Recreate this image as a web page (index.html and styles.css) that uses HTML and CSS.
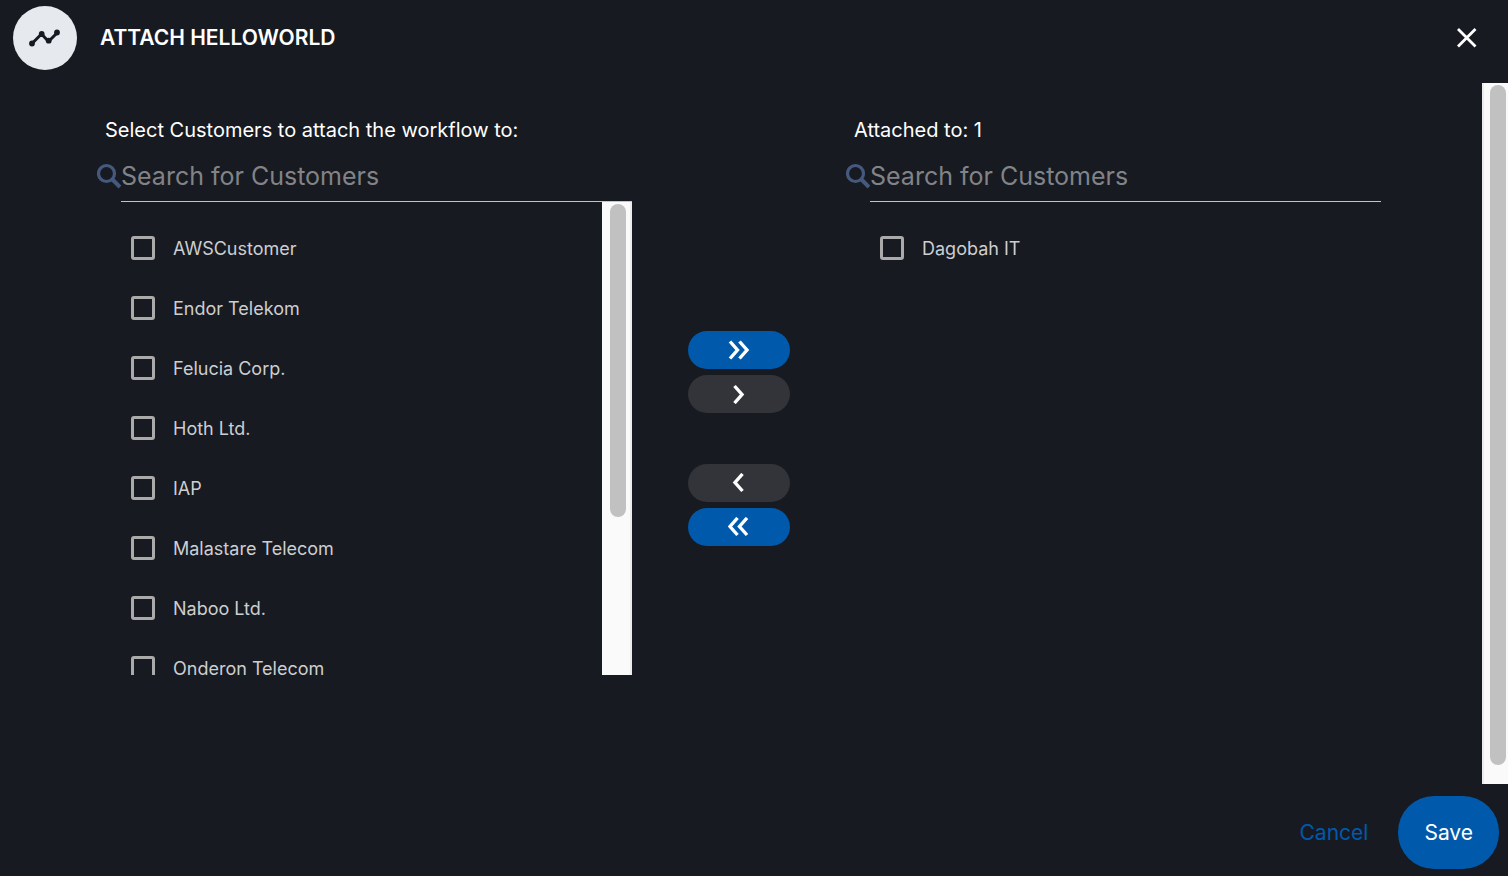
FILE: index.html
```html
<!DOCTYPE html>
<html lang="en">
<head>
<meta charset="utf-8">
<title>Attach HelloWorld</title>
<link rel="stylesheet" href="styles.css">
</head>
<body>
<div class="dialog">
  <header class="dialog-header">
    <span class="avatar">
      <svg width="32" height="32" viewBox="0 0 32 32" aria-hidden="true">
        <path d="M3 21.500 12.500 12l7 7.500 9-9" fill="none" stroke="#171a21" stroke-width="3" stroke-linejoin="round"/>
        <g fill="#171a21"><circle cx="3" cy="21.500" r="2.900"/><circle cx="12.700" cy="12" r="2.900"/><circle cx="19.700" cy="18.700" r="2.900"/><circle cx="28" cy="10.500" r="2.900"/></g>
      </svg>
    </span>
    <h1 class="title">ATTACH HELLOWORLD</h1>
    <button class="close" type="button" aria-label="Close">
      <svg width="20" height="20" viewBox="0 0 20 20" aria-hidden="true"><path d="M1 1l17.500 17.500M18.500 1L1 18.500" fill="none" stroke="#fff" stroke-width="2.800"/></svg>
    </button>
  </header>

  <main class="dialog-body">
    <div class="transfer">
      <section class="panel">
        <h2 class="panel-title">Select Customers to attach the workflow to:</h2>
        <div class="search">
          <svg class="search-icon" width="24" height="26" viewBox="0 0 24 26" aria-hidden="true"><circle cx="9.500" cy="10.500" r="8" fill="none" stroke="#45597f" stroke-width="3.200"/><path d="M15 16l8 8" stroke="#45597f" stroke-width="4"/></svg>
          <input class="search-input" type="text" placeholder="Search for Customers" aria-label="Search available customers">
        </div>
        <div class="list-frame">
          <ul class="list">
            <li><label class="row"><input class="check" type="checkbox">AWSCustomer</label></li>
            <li><label class="row"><input class="check" type="checkbox">Endor Telekom</label></li>
            <li><label class="row"><input class="check" type="checkbox">Felucia Corp.</label></li>
            <li><label class="row"><input class="check" type="checkbox">Hoth Ltd.</label></li>
            <li><label class="row"><input class="check" type="checkbox">IAP</label></li>
            <li><label class="row"><input class="check" type="checkbox">Malastare Telecom</label></li>
            <li><label class="row"><input class="check" type="checkbox">Naboo Ltd.</label></li>
            <li><label class="row"><input class="check" type="checkbox">Onderon Telecom</label></li>
          </ul>
          <div class="scrollbar scrollbar-list"><div class="thumb thumb-list"></div></div>
        </div>
      </section>

      <div class="moves">
        <div class="move-group">
          <button class="move move-all" type="button" aria-label="Attach all">
            <svg width="22" height="20" viewBox="0 0 22 20" aria-hidden="true"><path d="M2 1.500l7.500 8.500L2 18.500M11.500 1.500l7.500 8.500-7.500 8.500" fill="none" stroke="#fff" stroke-width="3.400"/></svg>
          </button>
          <button class="move" type="button" aria-label="Attach selected">
            <svg width="12" height="20" viewBox="0 0 12 20" aria-hidden="true"><path d="M1.500 2L9 10.500 1.500 19" fill="none" stroke="#fff" stroke-width="3.400"/></svg>
          </button>
        </div>
        <div class="move-group">
          <button class="move" type="button" aria-label="Detach selected">
            <svg width="14" height="20" viewBox="0 0 14 20" aria-hidden="true"><path d="M10.500 1L3 9.500l7.500 8.500" fill="none" stroke="#fff" stroke-width="3.400"/></svg>
          </button>
          <button class="move move-all" type="button" aria-label="Detach all">
            <svg width="22" height="20" viewBox="0 0 22 20" aria-hidden="true"><path d="M9.500 1L2 9.500 9.500 18M19 1l-7.500 8.500L19 18" fill="none" stroke="#fff" stroke-width="3.400"/></svg>
          </button>
        </div>
      </div>

      <section class="panel">
        <h2 class="panel-title">Attached to: 1</h2>
        <div class="search">
          <svg class="search-icon" width="24" height="26" viewBox="0 0 24 26" aria-hidden="true"><circle cx="9.500" cy="10.500" r="8" fill="none" stroke="#45597f" stroke-width="3.200"/><path d="M15 16l8 8" stroke="#45597f" stroke-width="4"/></svg>
          <input class="search-input" type="text" placeholder="Search for Customers" aria-label="Search attached customers">
        </div>
        <div class="list-frame">
          <ul class="list">
            <li><label class="row"><input class="check" type="checkbox">Dagobah IT</label></li>
          </ul>
        </div>
      </section>
    </div>
    <div class="scrollbar scrollbar-page"><div class="thumb thumb-page"></div></div>
  </main>

  <footer class="dialog-footer">
    <button class="cancel" type="button">Cancel</button>
    <button class="save" type="button">Save</button>
  </footer>
</div>
</body>
</html>
```
FILE: styles.css
```css
* { box-sizing: border-box; }

body {
  margin: 0;
  background: #171a21;
  color: #fff;
  font-family: Inter, Roboto, sans-serif;
}

button, input { font: inherit; }
button { border: 0; cursor: pointer; }

.dialog {
  display: flex;
  flex-direction: column;
  height: 100vh;
}

.dialog-header {
  display: flex;
  align-items: center;
  padding: 6px 31px 13px 13px;
}

.avatar {
  display: flex;
  align-items: center;
  justify-content: center;
  width: 64px;
  height: 64px;
  border-radius: 50%;
  background: #e6e9ee;
}

.title {
  margin: 0 auto 0 23px;
  font-size: 21px;
  line-height: 24px;
  font-weight: 600;
}

.close {
  display: flex;
  padding: 0;
  background: none;
}

.dialog-body {
  display: flex;
  flex: 1;
  min-height: 0;
}

.transfer {
  display: grid;
  grid-template-columns: 1fr 214px 1fr;
  grid-template-rows: minmax(0, 1fr);
  flex: 1;
  padding: 35px 101px 109px 97px;
}

.panel {
  display: flex;
  flex-direction: column;
  min-width: 0;
  min-height: 0;
}

.panel-title {
  margin: 0 0 8px;
  padding-left: 8px;
  font-size: 20px;
  line-height: 24px;
  font-weight: 400;
}

.search {
  display: flex;
  align-items: center;
}

.search-icon { flex: none; }

.search-input {
  flex: 1;
  min-width: 0;
  height: 52px;
  padding: 0;
  border: 0;
  border-bottom: 1px solid #c3c4c7;
  background: none;
  color: #fff;
  font-size: 25px;
}

.search-input::placeholder { color: #828387; opacity: 1; }

.list-frame {
  display: flex;
  flex: 1;
  min-height: 0;
}

.list {
  flex: 1;
  margin: 0;
  padding: 16px 0 0 34px;
  overflow: hidden;
  list-style: none;
}

.row {
  display: flex;
  align-items: center;
  gap: 18px;
  height: 60px;
  color: #cdced0;
  font-size: 18px;
}

.check {
  appearance: none;
  width: 24px;
  height: 24px;
  margin: 0;
  border: 3px solid #aaa;
  border-radius: 3px;
}

.check:checked { background: #0059ab; }

.scrollbar {
  flex: none;
  background: #fafafa;
}

.scrollbar-list {
  width: 30px;
  padding: 2px 4px 2px 8px;
  border-right: 2px solid #ececec;
}

.scrollbar-page {
  width: 26px;
  padding: 2px 2px 2px 6px;
  border-left: 2px solid #ececec;
}

.thumb {
  width: 16px;
  border-radius: 8px;
  background: #c1c1c1;
}

.thumb-list { height: 66.7%; }
.thumb-page { height: 97.5%; }

.moves {
  display: flex;
  flex-direction: column;
  align-items: center;
  justify-content: center;
  gap: 51px;
  padding-top: 84px;
}

.move-group {
  display: flex;
  flex-direction: column;
  gap: 6px;
}

.move {
  display: flex;
  align-items: center;
  justify-content: center;
  width: 102px;
  height: 38px;
  border-radius: 19px;
  background: #323439;
}

.move-all { background: #0059ab; }

.dialog-footer {
  display: flex;
  align-items: center;
  justify-content: flex-end;
  gap: 30px;
  padding: 12px 9px 7px;
  font-size: 21px;
}

.cancel {
  padding: 0;
  background: none;
  color: #0059ab;
}

.save {
  height: 73px;
  padding: 0 26px;
  border-radius: 36px;
  background: #0059ab;
  color: #fff;
}
```
